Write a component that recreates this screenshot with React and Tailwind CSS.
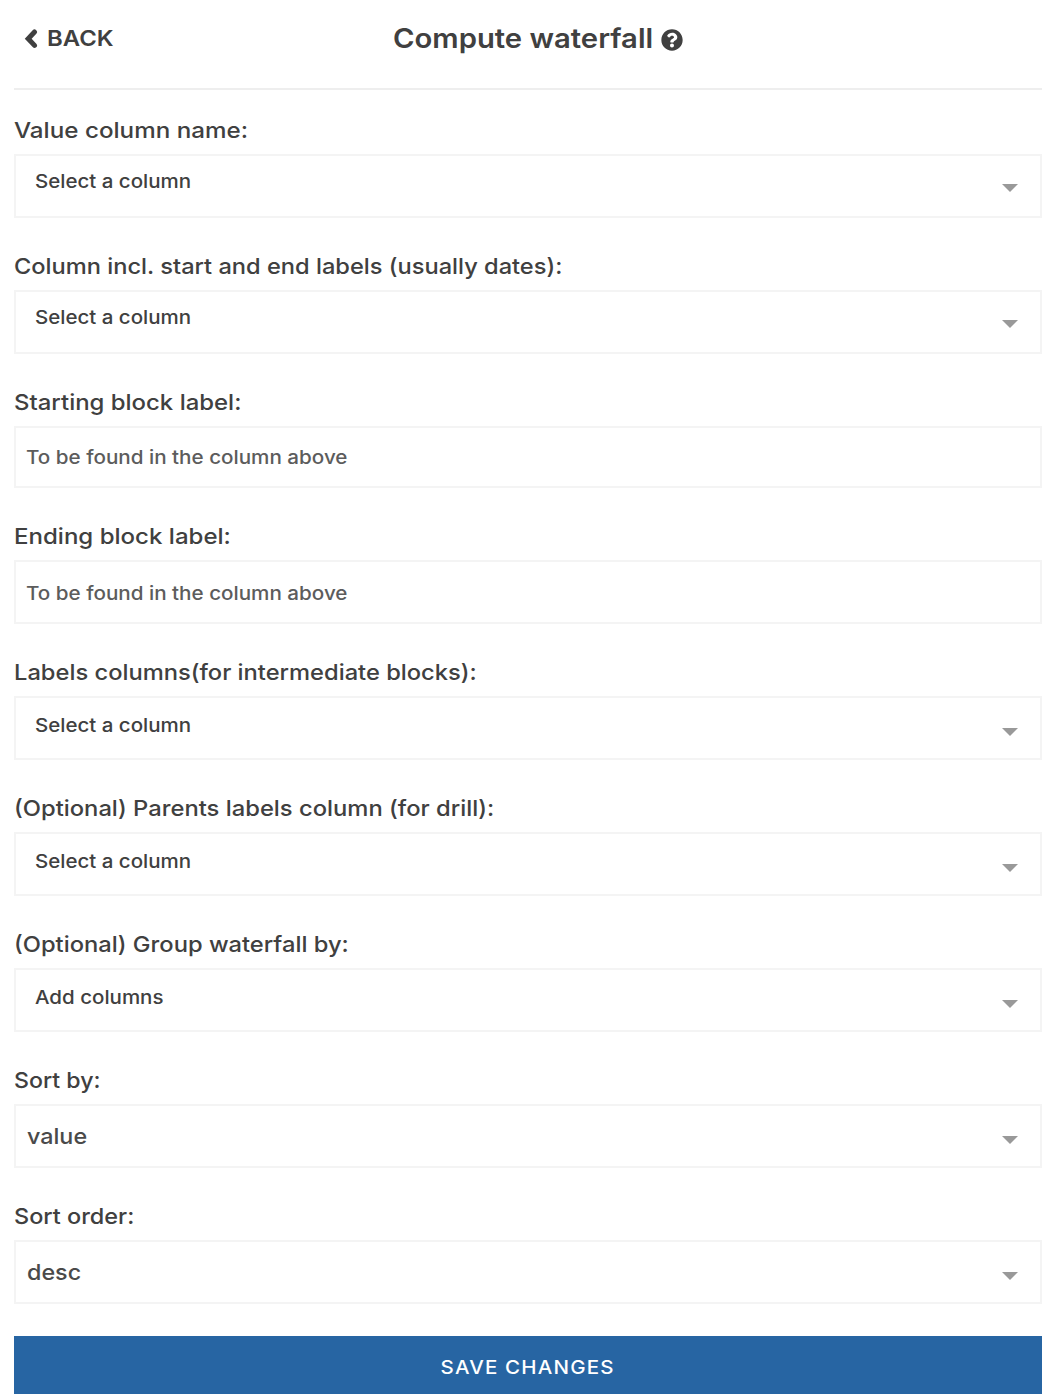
import { FaQuestionCircle } from 'react-icons/fa';

const FIELDS = [
  { label: 'Value column name:', stretch: 'scale-x-[1.1]', kind: 'multi', text: 'Select a column', pad: 'pt-[13px]', arrow: 'mt-7', height: 'h-16' },
  { label: 'Column incl. start and end labels (usually dates):', stretch: 'scale-x-[1.074]', kind: 'multi', text: 'Select a column', pad: 'pt-[13px]', arrow: 'mt-7', height: 'h-16' },
  { label: 'Starting block label:', stretch: 'scale-x-[1.088]', kind: 'input', text: 'To be found in the column above', pad: 'pt-[17px]', height: 'h-[62px]' },
  { label: 'Ending block label:', stretch: 'scale-x-[1.093]', kind: 'input', text: 'To be found in the column above', pad: 'pt-[19px]', height: 'h-16' },
  { label: 'Labels columns(for intermediate blocks):', stretch: 'scale-x-[1.077]', kind: 'multi', text: 'Select a column', pad: 'pt-[15px]', arrow: 'mt-[30px]', height: 'h-16' },
  { label: '(Optional) Parents labels column (for drill):', stretch: 'scale-x-[1.08]', kind: 'multi', text: 'Select a column', pad: 'pt-[15px]', arrow: 'mt-[30px]', height: 'h-16' },
  { label: '(Optional) Group waterfall by:', stretch: 'scale-x-[1.078]', kind: 'multi', text: 'Add columns', pad: 'pt-[15px]', arrow: 'mt-[30px]', height: 'h-16' },
  { label: 'Sort by:', stretch: 'scale-x-[1.053]', kind: 'select', text: 'value', pad: 'pt-[18px]', arrow: 'mt-[30px]', height: 'h-16' },
  { label: 'Sort order:', stretch: 'scale-x-[1.066]', kind: 'select', text: 'desc', pad: 'pt-[18px]', arrow: 'mt-[30px]', height: 'h-16' },
];

const KIND = {
  multi: { box: 'pl-[19px] text-[18.5px] text-[#404040]', text: 'scale-x-[1.108]' },
  input: { box: 'pl-[10px] text-[18.5px] text-[#5c5c5c]', text: 'scale-x-[1.115]' },
  select: { box: 'pl-[11px] text-[22px] text-[#4a4a4a]', text: 'scale-x-[1.06]' },
};

function Field({ label, stretch, kind, text, pad, arrow, height }) {
  return (
    <div>
      <div className="h-6 whitespace-nowrap text-[22px] leading-6">
        <span className={`inline-block origin-left ${stretch}`}>{label}</span>
      </div>
      <div className={`mt-3 flex items-start justify-between border-2 border-[#f4f4f4] pr-[22px] ${height} ${KIND[kind].box}`}>
        <span className={`origin-left leading-6 ${pad} ${KIND[kind].text}`}>{text}</span>
        {arrow && (
          <span className={`h-0 w-0 border-x-8 border-t-8 border-x-transparent border-t-[#999999] ${arrow}`} />
        )}
      </div>
    </div>
  );
}

export default function App() {
  return (
    <div className="h-[1400px] w-[1052px] overflow-hidden bg-white pl-[14px] pr-[10px] font-['Inter',sans-serif] font-medium text-[#404040]">
      <header className="grid h-[90px] grid-cols-[1fr_auto_1fr] border-b-2 border-[#eeeeee] pt-[22px] font-semibold">
        <button className="flex h-8 items-center pl-[10px] text-[22px] leading-8">
          <svg className="mr-[9px] mt-[2px] h-[20px] w-[14px]" viewBox="0 0 14 20" fill="none" stroke="currentColor" strokeWidth="5">
            <path d="M10.5 3 L4.2 9.7 L10.5 16.4" strokeLinecap="round" />
          </svg>
          <span className="origin-left scale-x-[1.085]">BACK</span>
        </button>
        <h1 className="ml-[20px] mt-px flex h-8 items-center text-[27px] leading-8">
          <span className="w-[262px]">
            <span className="inline-block origin-left scale-x-[1.083]">Compute waterfall</span>
          </span>
          <FaQuestionCircle className="ml-[6px] mt-px h-[22px] w-[22px]" />
        </h1>
      </header>
      <main className="flex flex-col gap-9 pt-7">
        {FIELDS.map((f) => (
          <Field key={f.label} {...f} />
        ))}
      </main>
      <button className="mt-8 flex h-[58px] w-full items-center justify-center bg-[#2765a3] pt-[6px] text-[19px] tracking-[1.1px] text-white">
        <span className="scale-x-[1.08]">SAVE CHANGES</span>
      </button>
    </div>
  );
}
